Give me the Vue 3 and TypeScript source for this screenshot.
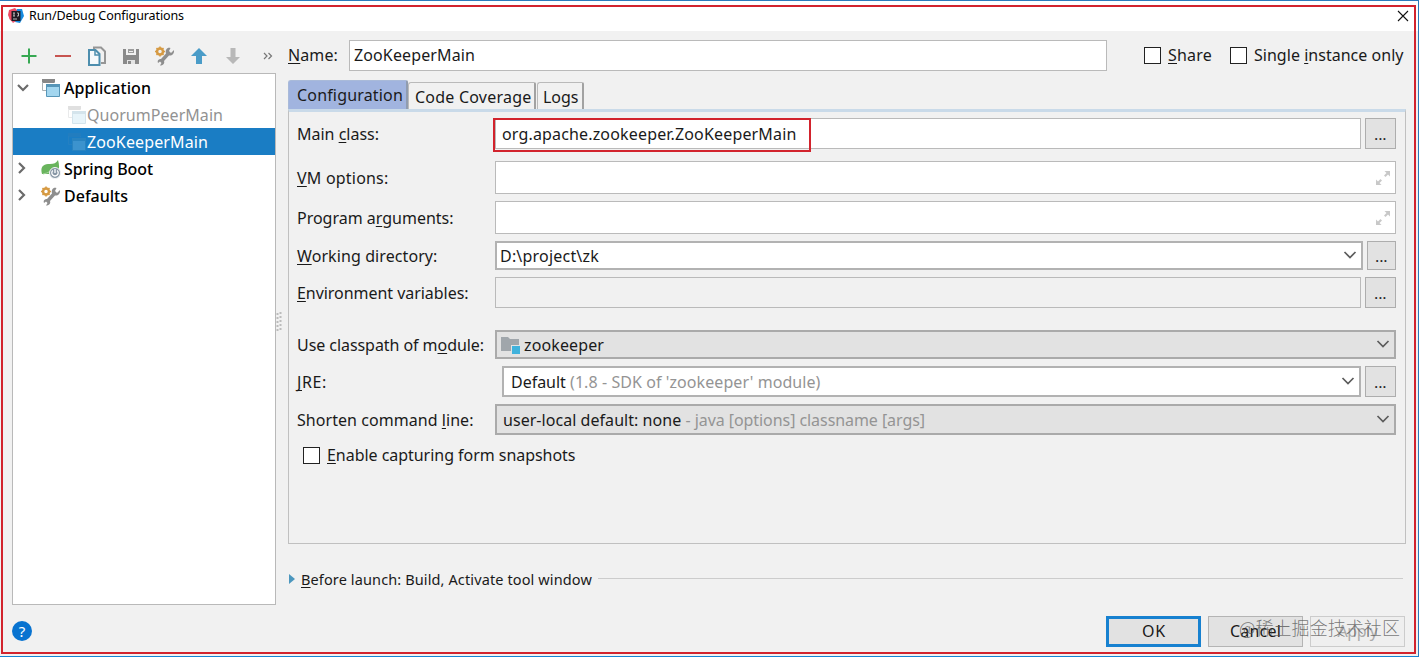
<script setup lang="ts">
import { ref, type Directive } from 'vue'

/** Spreads a text's letters so that it takes the given width in pixels. */
const vFit: Directive<HTMLElement, number> = {
  mounted(el, { value }) {
    const natural = el.getBoundingClientRect().width
    const count = (el.textContent ?? '').length
    if (count > 0) el.style.letterSpacing = `${(value - natural) / count}px`
  },
}

const tree = [
  { label: 'Application', width: 87, kind: 'app', open: true, child: false, selected: false },
  { label: 'QuorumPeerMain', width: 136, kind: 'faded', open: false, child: true, selected: false },
  { label: 'ZooKeeperMain', width: 121, kind: 'faded', open: false, child: true, selected: true },
  { label: 'Spring Boot', width: 89, kind: 'spring', open: false, child: false, selected: false },
  { label: 'Defaults', width: 64, kind: 'wrench', open: false, child: false, selected: false },
]

const name = ref('ZooKeeperMain')
</script>

<template>
  <div class="window">
    <header class="titlebar">
      <svg class="logo" width="16" height="16" viewBox="0 0 16 16">
        <path d="M1 2 7 0 10 3 7 14 2 12 0 7Z" fill="#ed4b64" />
        <path d="M9 1 14 1 16 8 12 15 7 14Z" fill="#168be0" />
        <path d="M1 10 8 13 5 15Z" fill="#e8566f" />
        <rect x="3.500" y="3" width="9" height="10" fill="#1d1a24" />
        <path d="M5 5h2M6 5v3M5 8h2M9 5h1.500v3H9M5 11h4" stroke="#bbb" stroke-width="1" fill="none" />
      </svg>
      <span v-fit="155" class="title">Run/Debug Configurations</span>
      <svg class="close" width="12" height="12" viewBox="0 0 12 12"><path d="M1 1 11 11M11 1 1 11" stroke="#111" stroke-width="1.1" /></svg>
    </header>

    <main class="body">
      <aside class="side">
        <div class="toolbar">
          <svg width="18" height="20" viewBox="0 0 18 20"><path d="M9 2.500v15M1.500 10h15" stroke="#36a852" stroke-width="2" /></svg>
          <svg width="18" height="20" viewBox="0 0 18 20"><path d="M1 10h16" stroke="#c75450" stroke-width="2" /></svg>
          <svg width="20" height="20" viewBox="0 0 20 20">
            <path d="M7 3V1.500h7l4 4V17h-4" fill="none" stroke="#969696" stroke-width="2" />
            <path d="M2 4h6.500l4 4v11H2Z" fill="#f5f9fb" stroke="#4d8eae" stroke-width="2" />
            <path d="M8 4v5h5" fill="none" stroke="#4d8eae" stroke-width="1.500" />
          </svg>
          <svg width="18" height="20" viewBox="0 0 18 20">
            <path d="M1 3h3v6h10V3h3v15h-2v-4H4v4H1Z" fill="#8a8a8a" />
            <path d="M6 3h6v4H6Z" fill="#9b9b9b" /><path d="M7 5h4v1H7Z" fill="#eee" />
            <path d="M4 13h11v5H4Z" fill="#8a8a8a" /><path d="M5 14h8v4H5Z" fill="#e4e4e4" /><path d="M6 15h3v3H6Z" fill="#8a8a8a" />
          </svg>
          <svg width="20" height="20" viewBox="0 0 20 20">
            <path d="M19 4 16 7 14 5l1.500-3C12 1 10 4 11 7.500L6 13c-2 0-4 1-3 4l2-1.500L6.500 17 5 19.500c3 0 5-2 4-4.500L14 9.500c3 .5 5.500-2 5-5.500Z" fill="#8e8e8e" />
            <circle cx="5" cy="5.500" r="3" fill="#f0f0f0" stroke="#d69a43" stroke-width="2.500" />
            <path d="M5 .5v2M5 8.500v2M0 5.500h2M8 5.500h2M1.500 2 3 3.500M7 7.500 8.500 9M8.500 2 7 3.500M3 7.500 1.500 9" stroke="#d69a43" stroke-width="1.500" />
          </svg>
          <svg width="18" height="20" viewBox="0 0 18 20"><path d="M9 2 17 10h-5v8H6v-8H1Z" fill="#4a9cc8" /></svg>
          <svg width="18" height="20" viewBox="0 0 18 20"><path d="M9 18 2 11h4.500V2h5v9H16Z" fill="#b8b8b8" /></svg>
          <svg width="10" height="20" viewBox="0 0 10 20"><path d="m1 7 3 3-3 3M5.500 7l3 3-3 3" fill="none" stroke="#777" stroke-width="1.200" /></svg>
        </div>
        <div class="tree">
          <div v-for="item in tree" :key="item.label" class="node" :class="{ child: item.child, selected: item.selected }">
            <span class="arrow">
              <svg v-if="!item.child && item.open" width="14" height="10" viewBox="0 0 14 10"><path d="m1 2 5 5 5-5" fill="none" stroke="#6b6b6b" stroke-width="2.200" /></svg>
              <svg v-else-if="!item.child" width="10" height="14" viewBox="0 0 10 14"><path d="m2 1 5 5-5 5" fill="none" stroke="#6b6b6b" stroke-width="2.200" /></svg>
            </span>
            <svg v-if="item.kind === 'app' || item.kind === 'faded'" class="nodeicon" :class="item.kind" width="18" height="18" viewBox="0 0 18 18">
              <g class="back"><path d="M0 0h13v4H0Z" fill="#888" /><path d="M.5 3v8.500H4M12.500 3v1" fill="none" stroke="#aab0b3" /></g>
              <path d="M4.500 5.500h13v12h-13Z" fill="#a3d6ef" stroke="#5796b8" /><path d="M4 5h14v3H4Z" fill="#5796b8" />
            </svg>
            <svg v-else-if="item.kind === 'spring'" class="nodeicon" width="20" height="20" viewBox="0 0 20 20">
              <path d="M17 1c2 7 2 13-7 14H1C-1 8 2 5 9 5c4 0 6-1 8-4Z" fill="#69b45d" />
              <path d="M2 15c5-1 9-3 12-7" fill="none" stroke="#a6d39e" />
              <circle cx="14" cy="14" r="5.500" fill="#8796a4" stroke="#f4f6f7" />
              <path d="M14 10v4M11.800 11.500a3.200 3.200 0 1 0 4.400 0" fill="none" stroke="#fff" stroke-width="1.300" />
            </svg>
            <svg v-else class="nodeicon" width="20" height="20" viewBox="0 0 20 20">
              <path d="M19 4 16 7 14 5l1.500-3C12 1 10 4 11 7.500L6 13c-2 0-4 1-3 4l2-1.500L6.500 17 5 19.500c3 0 5-2 4-4.500L14 9.500c3 .5 5.500-2 5-5.500Z" fill="#8e8e8e" />
              <circle cx="5" cy="5.500" r="3" fill="#fff" stroke="#d69a43" stroke-width="2.500" />
              <path d="M5 .5v2M5 8.500v2M0 5.500h2M8 5.500h2M1.500 2 3 3.500M7 7.500 8.500 9M8.500 2 7 3.500M3 7.500 1.500 9" stroke="#d69a43" stroke-width="1.500" />
            </svg>
            <span v-fit="item.width" class="nodelabel">{{ item.label }}</span>
          </div>
        </div>
      </aside>

      <div class="splitter">
        <svg width="6" height="20" viewBox="0 0 6 20"><path d="M1.500 1v19M4.500 0v18" stroke="#bcbcbc" stroke-width="2" stroke-dasharray="2 2" /></svg>
      </div>

      <section class="editor">
        <div class="namerow">
          <label class="namelabel"><span v-fit="50"><u>N</u>ame:</span></label>
          <div class="field namefield"><span v-fit="121">{{ name }}</span></div>
          <label class="check share"><i class="box"></i><span v-fit="44"><u>S</u>hare</span></label>
          <label class="check single"><i class="box"></i><span v-fit="149.500">Single <u>i</u>nstance only</span></label>
        </div>

        <nav class="tabs">
          <div class="tab active"><span v-fit="106">Configuration</span></div>
          <div class="tab coverage"><span v-fit="116.500">Code Coverage</span></div>
          <div class="tab logs"><span v-fit="35.500">Logs</span></div>
        </nav>

        <div class="panel">
          <div class="row main">
            <label><span v-fit="82">Main <u>c</u>lass:</span></label>
            <div class="field"><span v-fit="294.500">org.apache.zookeeper.ZooKeeperMain</span><i class="highlight"></i></div>
            <button class="more">...</button>
          </div>
          <div v-for="option in ['vm', 'program']" :key="option" class="row" :class="option">
            <label>
              <span v-if="option === 'vm'" v-fit="91.500"><u>V</u>M options:</span>
              <span v-else v-fit="156.500">Program a<u>r</u>guments:</span>
            </label>
            <div class="field expandable">
              <svg width="16" height="16" viewBox="0 0 16 16"><path d="M9.500 1H15v5.500l-2-2-2.500 2.500L9 5.500 11.500 3ZM1 9.500V15h5.500l-2-2L7 10.500 5.500 9 3 11.500Z" fill="#c8c8c8" /></svg>
            </div>
          </div>
          <div class="row directory">
            <label><span v-fit="140.500"><u>W</u>orking directory:</span></label>
            <div class="field combo"><span v-fit="99">D:\project\zk</span><svg class="chev" width="14" height="10" viewBox="0 0 14 10"><path d="m1.500 2 5.500 5.500L12.500 2" /></svg></div>
            <button class="more">...</button>
          </div>
          <div class="row env">
            <label><span v-fit="171.500"><u>E</u>nvironment variables:</span></label>
            <div class="field disabled"></div>
            <button class="more">...</button>
          </div>
          <div class="row module">
            <label><span v-fit="187">Use classpath of m<u>o</u>dule:</span></label>
            <div class="field combo gray">
              <svg class="folder" width="20" height="18" viewBox="0 0 20 18"><path d="M0 1h7l2 2h9v12H0Z" fill="#a0a6ab" /><path d="M10 9h10v9H10Z" fill="#e1e3e4" /><path d="M11 10h8v8h-8Z" fill="#40b2dc" /></svg>
              <span v-fit="80">zookeeper</span><svg class="chev" width="14" height="10" viewBox="0 0 14 10"><path d="m1.500 2 5.500 5.500L12.500 2" /></svg>
            </div>
          </div>
          <div class="row jre">
            <label><span v-fit="30"><u>J</u>RE:</span></label>
            <div class="field combo"><span v-fit="59">Default </span><span v-fit="250.500" class="hint">(1.8 - SDK of 'zookeeper' module)</span><svg class="chev" width="14" height="10" viewBox="0 0 14 10"><path d="m1.500 2 5.500 5.500L12.500 2" /></svg></div>
            <button class="more">...</button>
          </div>
          <div class="row shorten">
            <label><span v-fit="176.500">Shorten command <u>l</u>ine:</span></label>
            <div class="field combo gray"><span v-fit="182.500">user-local default: none </span><span v-fit="239.500" class="hint">- java [options] classname [args]</span><svg class="chev" width="14" height="10" viewBox="0 0 14 10"><path d="m1.500 2 5.500 5.500L12.500 2" /></svg></div>
          </div>
          <label class="check snapshots"><i class="box"></i><span v-fit="248.500"><u>E</u>nable capturing form snapshots</span></label>
        </div>

        <div class="launch">
          <svg width="6" height="10" viewBox="0 0 6 10"><path d="M0 0 6 5 0 10Z" fill="#4c97be" /></svg>
          <span v-fit="291"><u>B</u>efore launch: Build, Activate tool window</span>
          <i class="rule"></i>
        </div>
      </section>
    </main>

    <footer class="footer">
      <span class="help">?</span>
      <button class="action ok"><span v-fit="24">OK</span></button>
      <button class="action"><span v-fit="51">Cancel</span></button>
      <button class="action apply"><span v-fit="40">Apply</span></button>
      <span v-fit="161" class="watermark">@稀土掘金技术社区</span>
    </footer>
    <i class="frame"></i>
  </div>
</template>

<style>
body { overflow: hidden; background: #f1f1f1; }
</style>

<style scoped>
* { box-sizing: border-box; }
.window { position: relative; width: 1419px; height: 657px; display: flex; flex-direction: column; background: #f1f1f1; border-top: 1px solid #2c7bbb; border-right: 1px solid #2c7bbb; border-bottom: 1px solid #1683d2; color: #1a1a1a; font: 16px/22px "Noto Sans", "Noto Sans CJK SC", sans-serif; white-space: pre; overflow: hidden; }
.frame { position: absolute; left: 1px; top: 4px; width: 1415px; height: 649px; border: 2px solid #d2232d; pointer-events: none; }
span { flex: none; }
svg { display: block; flex: none; }
u { text-decoration: underline; text-decoration-thickness: 1px; text-underline-offset: 2px; text-decoration-skip-ink: none; }
.titlebar { height: 30px; flex: none; display: flex; align-items: flex-start; padding: 6px 9px 0 8px; background: #fff; }
.logo { margin-top: 1px; }
.title { margin-left: 5px; font-size: 12.5px; line-height: 17px; color: #000; }
.close { margin: 3px 0 0 auto; }
.body { flex: none; height: 574px; display: flex; padding-left: 12px; }
.side { width: 264px; }
.toolbar { height: 42px; display: flex; align-items: flex-start; gap: 16px; padding: 15px 0 0 8px; }
.toolbar svg:nth-child(3) { margin: 0 -1px 0 -1px; }
.toolbar svg:nth-child(5) { margin: 0 -1px; }
.toolbar svg:nth-child(8) { margin-left: 5px; }
.tree { height: 532px; border: 1px solid #b9b9b9; background: #fff; }
.node { height: 27px; display: flex; align-items: center; font-weight: 500; color: #000; }
.arrow { width: 28px; flex: none; padding-left: 4px; }
.nodeicon { width: 20px; }
.nodelabel { margin-left: 3px; }
.child .arrow { width: 54px; }
.child { font-weight: 400; color: #929292; }
.child .nodeicon { opacity: .25; }
.child .nodelabel { margin-left: 0; }
.selected { background: #1a7dc4; color: #fff; }
.selected .back { opacity: .3; }
.splitter { width: 12px; padding: 281px 0 0; }
.editor { width: 1118px; }
.namerow { height: 49px; display: flex; align-items: center; padding-bottom: 1px; }
.namelabel { width: 61px; }
.field { position: relative; flex: 1; min-width: 0; height: 100%; display: flex; align-items: center; border: 1px solid #bababa; background: #fff; padding-left: 5px; }
.namefield { flex: 0 0 758px; height: 31px; padding-left: 4px; }
.check { display: flex; align-items: center; }
.box { width: 17px; height: 17px; flex: none; border: 1px solid #222; background: #fff; }
.check span { margin-left: 7px; }
.share { margin-left: 37px; }
.single { margin-left: 18px; }
.tabs { height: 29px; display: flex; align-items: flex-end; }
.tab { height: 27px; border: 1px solid #bababa; border-right: 2px solid #a2a2a2; border-bottom: 0; padding: 3px 0 0 5px; border-radius: 3px 2px 0 0; }
.active { width: 120px; height: 29px; background: #a1b4df; border-color: #a9bad9; border-right-color: #909caf; padding: 3px 0 0 8px; }
.coverage { width: 128px; padding-left: 6px; }
.logs { width: 47px; margin-left: 1px; }
.panel { height: 435px; border: 1px solid #c0c0c0; border-top: 3px solid #c9dae9; padding: 6px 9px 0 8px; }
.row { display: flex; }
.row > label { width: 198px; flex: none; display: flex; align-items: center; }
.main, .env, .jre, .shorten { height: 31px; }
.vm, .program { height: 33px; }
.directory, .module { height: 29px; }
.vm { margin-top: 12px; }
.program, .directory, .env, .jre, .shorten { margin-top: 7px; }
.module { margin-top: 22px; }
.main .field { padding-left: 6px; }
.highlight { position: absolute; left: -3px; top: -1px; width: 318px; height: 34px; border: 2px solid #d2232d; }
.more { width: 31px; height: 100%; margin-left: 4px; padding: 2px 0 0; border: 1px solid #adadad; background: #e2e2e2; font: 500 14px/16px "Noto Sans", sans-serif; color: #222; letter-spacing: .3px; }
.directory .more { width: 29px; }
.expandable { justify-content: flex-end; padding-right: 4px; }
.combo { border: 2px solid #b2b2b2; padding: 0 4px 0 3px; }
.gray { background: #e2e2e2; border-color: #aaa; padding-left: 6px; }
.disabled { background: #f1f1f1; }
.module .field { padding-left: 4px; }
.folder { margin-right: 3px; }
.jre .field { margin-left: 7px; padding-left: 7px; }
.hint { color: #949494; }
.chev { margin: -2px 0 0 auto; }
.chev path { fill: none; stroke: #5c5c5c; stroke-width: 1.700; }
.snapshots { height: 17px; margin: 12px 0 0 6px; }
.snapshots span { margin-top: -2px; }
.launch { height: 22px; margin-top: 24px; display: flex; align-items: center; font-size: 14.5px; }
.launch span { margin: 0 6px; }
.launch svg { margin-left: 1px; }
.rule { flex: 1; height: 1px; margin: -2px 3px 0 0; background: #ccc; }
.footer { position: relative; height: 51px; display: flex; align-items: flex-start; gap: 7px; padding: 11px 13px 0 12px; }
.help { width: 20px; height: 20px; margin: 5px auto 0 0; border-radius: 50%; background: #0873d0; color: #fff; text-align: center; font-size: 15px; line-height: 20px; }
.action { width: 95px; height: 31px; border: 1px solid #b4b4b4; background: #e2e2e2; font: 16px/22px "Noto Sans", sans-serif; color: #1a1a1a; padding: 0 0 2px; }
.ok { border: 3px solid #1781d0; padding-left: 1px; }
.apply { border-color: #ccc; background: #efefef; color: #aaa; }
.watermark { position: absolute; left: 1239px; top: 9px; font: 300 18px/26px "Noto Sans CJK SC", sans-serif; color: rgba(80, 80, 80, .75); }
</style>
